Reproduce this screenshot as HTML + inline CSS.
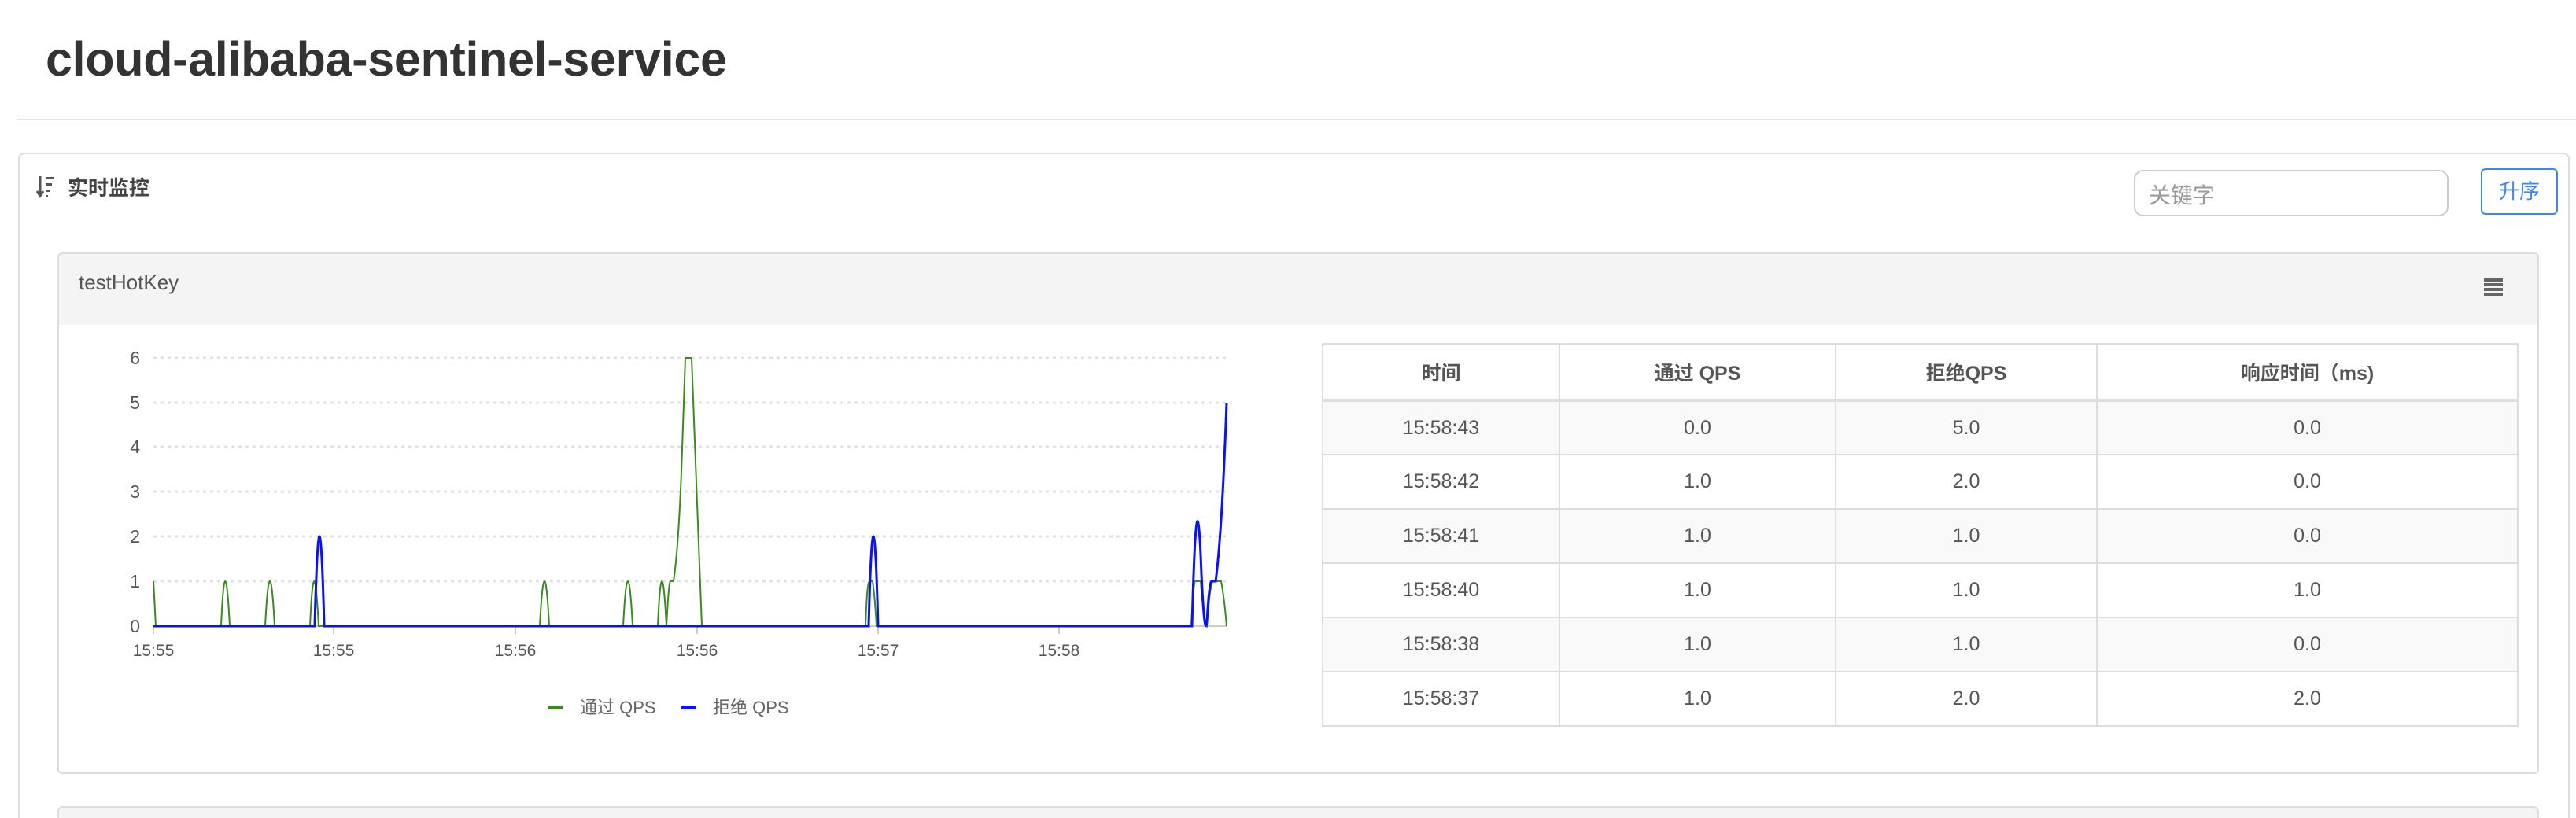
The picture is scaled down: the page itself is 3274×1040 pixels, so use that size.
<!DOCTYPE html>
<html style="overflow:hidden;height:1040px"><head><meta charset="utf-8"><style>
*{box-sizing:border-box;margin:0;padding:0}
body{width:3274px;height:1040px;background:#fff;position:relative;overflow:hidden;font-family:"Liberation Sans","Noto Sans CJK SC",sans-serif;color:#333}
.a{position:absolute}
table{border-collapse:collapse;position:absolute;left:1680px;top:436px;width:1521px;font-size:25px;color:#555}
td,th{border:2px solid #ddd;text-align:center;height:69px;padding:0}
th{height:72px;border-bottom:4px solid #ddd;font-weight:bold;color:#555}
tbody tr:nth-child(odd){background:#f9f9f9}
</style></head><body>
<div class="a" style="left:58px;top:40px;font-size:61px;font-weight:bold;color:#333;letter-spacing:-0.3px">cloud-alibaba-sentinel-service</div>
<div class="a" style="left:21px;top:151px;width:3253px;height:2px;background:#e5e5e5"></div>
<div class="a" style="left:23px;top:194px;width:3243px;height:870px;border:2px solid #ddd;border-radius:8px"></div>
<svg class="a" style="left:46px;top:222px" width="26" height="30" viewBox="0 0 26 30"><path d="M5 2v24M1 21l4 6 4-6" stroke="#555" stroke-width="3" fill="none"/><rect x="12" y="3" width="11" height="3" fill="#555"/><rect x="12" y="11" width="8" height="3" fill="#555"/><rect x="12" y="19" width="5" height="3" fill="#555"/><rect x="12" y="26" width="3" height="3" fill="#555"/></svg>
<div class="a" style="left:86px;top:219px;font-size:26px;font-weight:bold;color:#444">实时监控</div>
<div class="a" style="left:2712px;top:216px;width:400px;height:59px;border:2px solid #ccc;border-radius:12px;font-size:28px;color:#999;padding:9px 0 0 17px">关键字</div>
<div class="a" style="left:3153px;top:214px;width:98px;height:59px;border:2px solid #3a86f7;border-radius:6px;font-size:26px;color:#3a86f7;text-align:center;line-height:55px">升序</div>
<div class="a" style="left:73px;top:321px;width:3154px;height:663px;border:2px solid #ddd;border-radius:6px;overflow:hidden">
<div style="height:90px;background:#f4f4f4"></div></div>
<div class="a" style="left:100px;top:344px;font-size:26px;color:#555">testHotKey</div>
<div class="a" style="left:3157px;top:354px;width:24px;height:4px;background:#666;box-shadow:0 6px 0 #666,0 12px 0 #666,0 18px 0 #666"></div>
<div class="a" style="left:73px;top:1025px;width:3154px;height:40px;border:2px solid #ddd;border-radius:6px;background:#f4f4f4"></div>
<svg class="a" style="left:0;top:0" width="1660" height="1000">
<g stroke="#e2e2e2" stroke-width="3" stroke-dasharray="4 5">
<line x1="195" y1="455" x2="1559" y2="455"/><line x1="195" y1="512" x2="1559" y2="512"/><line x1="195" y1="568" x2="1559" y2="568"/><line x1="195" y1="625" x2="1559" y2="625"/><line x1="195" y1="682" x2="1559" y2="682"/><line x1="195" y1="739" x2="1559" y2="739"/></g>
<line x1="195" y1="796" x2="1559" y2="796" stroke="#ccc" stroke-width="2"/>
<g stroke="#ccc" stroke-width="2"><line x1="195" y1="796" x2="195" y2="806"/><line x1="424" y1="796" x2="424" y2="806"/><line x1="655" y1="796" x2="655" y2="806"/><line x1="886" y1="796" x2="886" y2="806"/><line x1="1116" y1="796" x2="1116" y2="806"/><line x1="1346" y1="796" x2="1346" y2="806"/></g>
<g font-size="23" fill="#555" text-anchor="end"><text x="178" y="463">6</text><text x="178" y="520">5</text><text x="178" y="576">4</text><text x="178" y="633">3</text><text x="178" y="690">2</text><text x="178" y="747">1</text><text x="178" y="804">0</text></g>
<g font-size="21" fill="#555" text-anchor="middle"><text x="195" y="834">15:55</text><text x="424" y="834">15:55</text><text x="655" y="834">15:56</text><text x="886" y="834">15:56</text><text x="1116" y="834">15:57</text><text x="1346" y="834">15:58</text></g>
<path fill="none" stroke="#3a8a1e" stroke-width="2" d="M195 739 L198 796 L281 796 Q286 682 292 796 L337 796 Q343 682 349 796 L394 796 Q399 682 405 796 L686 796 Q692 682 698 796 L792 796 Q798 682 804 796 L836 796 Q841 682 847 796 Q850 739 852 739 L856 739 Q862 700 866 600 L871 455 L879 455 L886 640 L892 796 L1100 796 Q1102 739 1105 739 L1109 739 Q1112 760 1114 796 L1514 796 Q1517 739 1519 739 L1526 739 Q1530 790 1534 796 Q1538 739 1542 739 L1552 739 Q1556 760 1559 796"/>
<path fill="none" stroke="#0a12f5" stroke-width="3" d="M195 796 L400 796 Q406 568 412 796 L1104 796 Q1110 568 1116 796 L1515 796 Q1521 568 1527 730 Q1531 815 1534 790 Q1537 739 1540 739 L1545 739 Q1553 680 1559 512"/>
<rect x="697" y="897" width="18" height="5" fill="#3a8a1e"/>
<text x="737" y="907" font-size="22" fill="#666">通过 QPS</text>
<rect x="866" y="897" width="18" height="5" fill="#0a12f5"/>
<text x="906" y="907" font-size="22" fill="#666">拒绝 QPS</text>
</svg>
<table><colgroup><col style="width:301px"><col style="width:351px"><col style="width:332px"><col></colgroup>
<thead><tr><th>时间</th><th>通过 QPS</th><th>拒绝QPS</th><th>响应时间（ms)</th></tr></thead>
<tbody>
<tr><td>15:58:43</td><td>0.0</td><td>5.0</td><td>0.0</td></tr>
<tr><td>15:58:42</td><td>1.0</td><td>2.0</td><td>0.0</td></tr>
<tr><td>15:58:41</td><td>1.0</td><td>1.0</td><td>0.0</td></tr>
<tr><td>15:58:40</td><td>1.0</td><td>1.0</td><td>1.0</td></tr>
<tr><td>15:58:38</td><td>1.0</td><td>1.0</td><td>0.0</td></tr>
<tr><td>15:58:37</td><td>1.0</td><td>2.0</td><td>2.0</td></tr>
</tbody></table>
</body></html>
